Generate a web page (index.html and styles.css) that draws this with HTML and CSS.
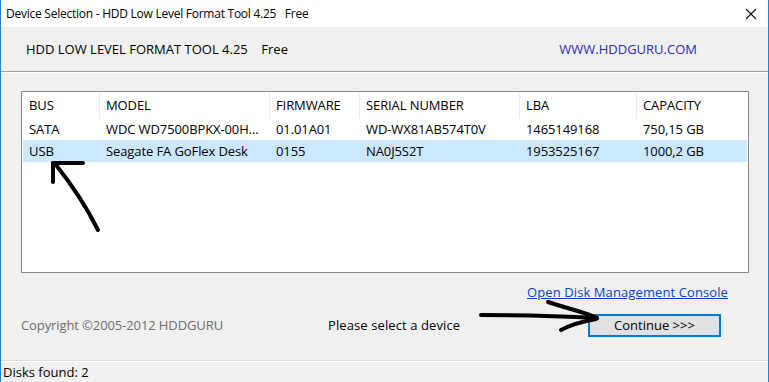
FILE: index.html
```html
<!DOCTYPE html>
<html>
<head>
<meta charset="utf-8">
<link rel="stylesheet" href="styles.css">
</head>
<body>
<div class="window">
  <div class="titlebar">
    <span class="title">Device Selection - HDD Low Level Format Tool 4.25&nbsp;&nbsp;&nbsp;Free</span>
    <svg class="close" width="12" height="12" viewBox="0 0 12 12"><path d="M1 1 L11 11 M11 1 L1 11" stroke="#111" stroke-width="1.1" fill="none"/></svg>
  </div>
  <div class="header">
    <span class="app-name">HDD LOW LEVEL FORMAT TOOL 4.25&nbsp;&nbsp;&nbsp;&nbsp;Free</span>
    <span class="site">WWW.HDDGURU.COM</span>
  </div>
  <div class="content">
    <div class="listbox">
      <div class="row head">
        <div class="cell">BUS</div>
        <div class="cell">MODEL</div>
        <div class="cell">FIRMWARE</div>
        <div class="cell">SERIAL NUMBER</div>
        <div class="cell">LBA</div>
        <div class="cell">CAPACITY</div>
      </div>
      <div class="row">
        <div class="cell">SATA</div>
        <div class="cell">WDC WD7500BPKX-00H...</div>
        <div class="cell">01.01A01</div>
        <div class="cell">WD-WX81AB574T0V</div>
        <div class="cell">1465149168</div>
        <div class="cell">750,15 GB</div>
      </div>
      <div class="row selected">
        <div class="cell">USB</div>
        <div class="cell">Seagate FA GoFlex Desk</div>
        <div class="cell">0155</div>
        <div class="cell">NA0J5S2T</div>
        <div class="cell">1953525167</div>
        <div class="cell">1000,2 GB</div>
      </div>
    </div>
    <div class="link-row">
      <a class="disk-link" href="#">Open Disk Management Console</a>
    </div>
    <div class="action-row">
      <span class="copyright">Copyright ©2005-2012 HDDGURU</span>
      <span class="prompt">Please select a device</span>
      <button class="continue">Continue &gt;&gt;&gt;</button>
    </div>
  </div>
  <div class="statusbar">Disks found: 2</div>
  <svg class="scribble" width="769" height="382" viewBox="0 0 769 382">
    <g stroke="#000" stroke-width="4" stroke-linecap="round" fill="none">
      <path d="M98 230 C 88 210, 72 185, 56 165"/>
      <path d="M53 163 L83 163"/>
      <path d="M53 163 L53 182"/>
      <path d="M481 315 C 520 315, 560 316, 597 318"/>
      <path d="M548 302 C 565 308, 585 312, 597 318"/>
      <path d="M561 330 C 572 324, 585 321, 596 319"/>
    </g>
  </svg>
</div>
</body>
</html>
```

FILE: styles.css
```css
* { box-sizing: border-box; }
html, body { margin: 0; padding: 0; }
body {
  width: 769px;
  height: 382px;
  overflow: hidden;
  font-family: "Open Sans", "Noto Sans", sans-serif;
  font-size: 13px;
  color: #000;
}
.window {
  position: relative;
  width: 769px;
  height: 382px;
  background: #f0f0f0;
  border-left: 1px solid #1883d7;
  border-right: 1px solid #1883d7;
  display: flex;
  flex-direction: column;
}
.titlebar {
  height: 27px;
  background: #fff;
  display: flex;
  align-items: center;
  justify-content: space-between;
  padding: 0 11px 0 5px;
  flex: none;
}
.title { font-size: 12px; letter-spacing: -0.25px; }
.header {
  height: 45px;
  flex: none;
  display: flex;
  align-items: center;
  justify-content: space-between;
  padding: 0 71px 0 25px;
  border-bottom: 1px solid #a0a0a0;
  box-shadow: 0 1px 0 #fff;
}
.app-name { letter-spacing: 0; }
.site { color: #2a2ab0; letter-spacing: 0; }
.content {
  flex: 1;
  display: flex;
  flex-direction: column;
  padding: 19px 19px 0 20px;
  border-bottom: 1px solid #dcdcdc;
}
.listbox {
  height: 182px;
  background: #fff;
  border: 1px solid #828790;
  padding: 1px;
}
.row {
  display: grid;
  grid-template-columns: 77px 170px 90px 160px 117px 1fr;
  height: 22px;
  align-items: center;
}
.row.head { height: 25px; }
.row.head .cell { border-right: 1px solid #ececec; height: 25px; line-height: 25px; }
.row.head .cell:last-child { border-right: none; }
.cell {
  padding-left: 6px;
  white-space: nowrap;
  overflow: hidden;
  letter-spacing: -0.1px;
}
.row.selected { background: #cce8ff; }
.link-row {
  display: flex;
  justify-content: flex-end;
  padding: 10px 21px 0 0;
  height: 29px;
}
.disk-link { color: #0b3fcf; text-decoration: underline; letter-spacing: 0.1px; }
.action-row {
  display: flex;
  align-items: center;
  margin-top: 11px;
  height: 24px;
}
.copyright { color: #6d6d6d; width: 307px; letter-spacing: -0.1px; }
.prompt { width: 260px; letter-spacing: 0.1px; }
.continue {
  width: 133px;
  height: 23px;
  background: #e1e1e1;
  border: 2px solid #0078d7;
  font-family: inherit;
  font-size: 13px;
  padding: 0;
  letter-spacing: 0;
  color: #000;
}
.statusbar {
  height: 21px;
  flex: none;
  padding-left: 2px;
  line-height: 20px;
  border-top: 1px solid #fff;
}
.scribble {
  position: absolute;
  left: -1px;
  top: 0;
  pointer-events: none;
}
```
